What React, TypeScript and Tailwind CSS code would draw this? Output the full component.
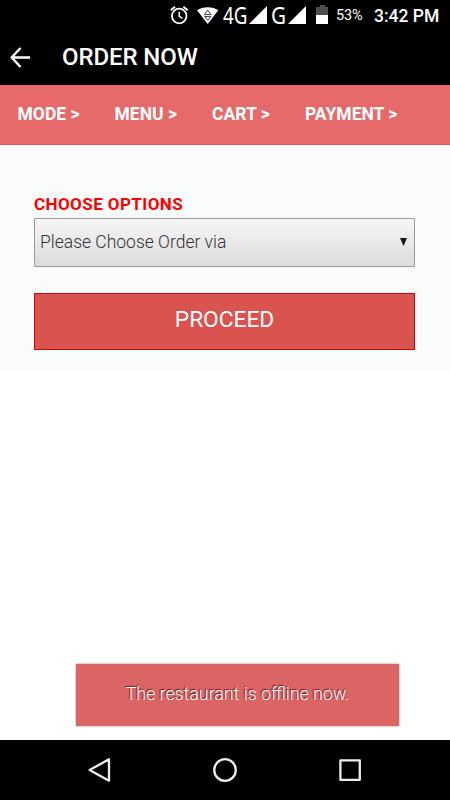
const steps = [
  { label: 'MODE', width: 'w-[97px]' },
  { label: 'MENU', width: 'w-[97.5px]' },
  { label: 'CART', width: 'w-[93px]' },
  { label: 'PAYMENT', width: 'w-[110px]' },
];

function SignalIcon({ className }: { className: string }) {
  return (
    <svg className={className} width="18" height="18" viewBox="0 0 18 18">
      <path d="M18 0v18H0z" fill="#fff" />
    </svg>
  );
}

function StatusBar() {
  return (
    <div className="flex h-8 items-start pl-[170px] text-white">
      <svg className="mt-[6px] shrink-0" width="18" height="19" viewBox="0 0 18 19" fill="none" stroke="#fff">
        <circle cx="9.2" cy="10" r="7.3" strokeWidth="1.8" />
        <path d="M9.2 5.7v4.7l3.2 2" strokeWidth="1.5" />
        <path d="M.8 4.2 5 .8M13.4.8l4.2 3.4" strokeWidth="1.9" />
      </svg>
      <svg className="mt-[7px] ml-[9px] shrink-0" width="22" height="18" viewBox="0 0 22 18">
        <path d="M0 3.3C6-.9 15.5-.9 21.3 3.3L10.7 17z" fill="#fff" />
        <path d="m7.4 7.6 3.3-4.4L14 7.6zM7.6 9.6l3.1 3.8 3.1-3.8z" fill="none" stroke="#222" strokeWidth=".9" />
      </svg>
      <span className="ml-[4px] w-[26px] origin-left scale-x-[.8] pt-[4px] font-['Noto_Sans',sans-serif] text-[23.5px] leading-[22px]">
        4G
      </span>
      <SignalIcon className="mt-[6px] shrink-0" />
      <span className="ml-[4px] w-[17px] origin-left scale-x-[.9] pt-[4px] font-['Noto_Sans',sans-serif] text-[23px] leading-[22px]">
        G
      </span>
      <SignalIcon className="mt-[6px] shrink-0" />
      <svg className="mt-[5px] ml-[10px] shrink-0" width="12" height="19" viewBox="0 0 12 19">
        <path d="M4 0h5v2h3v8H0V2h4z" fill="#4d4d4d" />
        <path d="M0 10h12v9H0z" fill="#fff" />
      </svg>
      <span className="ml-[8px] w-[38px] pt-[8px] text-[14.5px] leading-4 tracking-[-.2px]">53%</span>
      <span className="whitespace-nowrap pt-[6px] text-[17.5px] font-medium leading-5">3:42 PM</span>
    </div>
  );
}

function NavigationBar() {
  return (
    <div className="flex h-[60px] items-center bg-black pl-[88px]">
      <svg className="shrink-0" width="274" height="26" viewBox="0 0 274 26" fill="none" stroke="#eee" strokeWidth="2.3" strokeLinejoin="round">
        <path d="M1.6 13 21 2.3v21.4z" />
        <circle cx="137" cy="13" r="10.8" />
        <path d="M252.4 3.4h19.4v19.4h-19.4z" />
      </svg>
    </div>
  );
}

export default function App() {
  return (
    <div className="flex h-[800px] w-[450px] flex-col bg-white font-[Roboto,sans-serif]">
      <header className="h-[85px] bg-black">
        <StatusBar />
        <div className="flex items-start pl-[10px]">
          <svg className="mt-[15px]" width="21" height="21" viewBox="0 0 21 21" fill="none" stroke="#fff" strokeWidth="2.4">
            <path d="M10.5 1 1.7 10.5l8.8 9.5M1.5 10.5H20" />
          </svg>
          <h1 className="ml-[31px] pt-[9px] text-[24px] font-medium leading-8 tracking-[-.1px] text-white">
            ORDER NOW
          </h1>
        </div>
      </header>
      <nav className="flex h-[60px] items-center border-b border-[#df5253] bg-[#e66a6a] pl-[17.5px] text-[17.5px] font-bold text-white">
        {steps.map((step) => (
          <span key={step.label} className={`${step.width} shrink-0 whitespace-nowrap`}>
            {step.label} &gt;
          </span>
        ))}
      </nav>
      <main className="h-[225px] bg-[#fafcfb] px-[34px] pt-[49px]">
        <div className="text-[17px] font-bold leading-5 tracking-[.42px] text-[#ff0000]">
          CHOOSE OPTIONS
        </div>
        <button
          type="button"
          className="mt-[4px] flex h-[49px] w-[381px] items-center justify-between rounded-[1px] border border-[#999] bg-linear-to-b from-[#f6f6f6] to-[#dcdcdc] pr-[7px] pl-[5px] text-[17.5px] font-light text-[#333]"
        >
          <span>Please Choose Order via</span>
          <svg className="mb-px" width="7" height="8" viewBox="0 0 7 8">
            <path d="M0 0h7L3.5 8z" fill="#181818" />
          </svg>
        </button>
        <button
          type="button"
          className="mt-[26px] flex h-[57px] w-[381px] items-center justify-center border border-[#cc0505] bg-[#d9534f] pb-[3px] text-[22.7px] text-white"
        >
          PROCEED
        </button>
      </main>
      <div className="flex grow items-end pb-[14px] pl-[76px]">
        <div className="flex h-[62px] w-[323px] items-center justify-center bg-[#db6565] pb-px text-[17.8px] font-light text-white shadow-[0_0_2px_#888] [text-shadow:-1px_-1px_1px_#65191b]">
          The restaurant is offline now.
        </div>
      </div>
      <NavigationBar />
    </div>
  );
}
